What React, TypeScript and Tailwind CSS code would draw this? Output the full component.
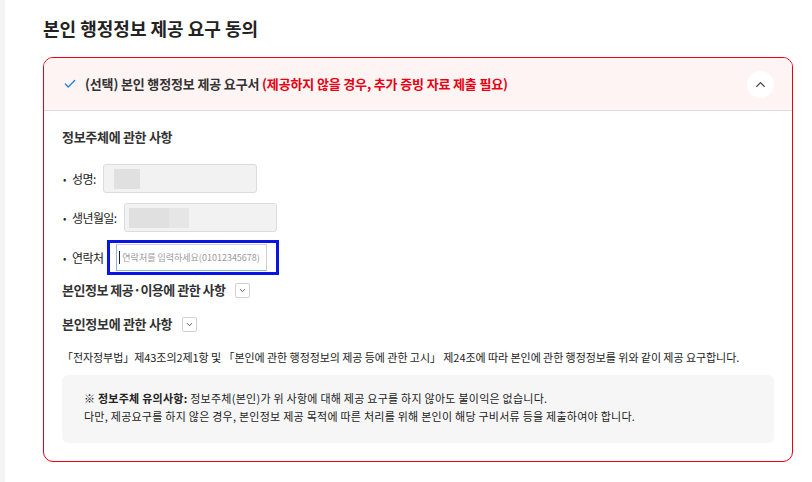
import { Check, ChevronDown, ChevronUp } from "lucide-react"

function SmallToggle() {
  return (
    <button className="flex h-[15px] w-[15px] items-center justify-center rounded-[2px] border border-[#d2d2d2] bg-white">
      <ChevronDown className="h-[9px] w-[9px] text-[#555]" strokeWidth={2.5} />
    </button>
  )
}

function Label({ text }: { text: string }) {
  return (
    <div className="flex items-center text-[12px] leading-[18px] tracking-[-0.6px] text-[#222]">
      <span className="w-[10px] pl-[1px] text-[10px]">•</span>
      <span>{text}</span>
    </div>
  )
}

export default function App() {
  return (
    <div className="flex min-h-[482px] bg-white font-['Noto_Sans_CJK_KR','Noto_Sans',sans-serif] text-[#222]">
      <div className="w-[5px] shrink-0 bg-[#f4f4f4]" />

      <main className="ml-[38px] w-[750px] pt-[16px]">
        <h2 className="text-[18px] leading-[24px] font-bold text-[#222]">
          본인 행정정보 제공 요구 동의
        </h2>

        <section className="mt-[17px] overflow-hidden rounded-[10px] border border-[#e60012]">
          {/* 헤더 */}
          <div className="flex h-[53px] items-center border-b border-[#dcdcdc] bg-[#fff4f4] pl-[19px] pr-[18px]">
            <Check className="h-[14px] w-[14px] text-[#2f7de1]" strokeWidth={2.4} />
            <p className="ml-[8px] text-[13px] font-semibold tracking-[-0.15px] text-[#333]">
              (선택) 본인 행정정보 제공 요구서{" "}
              <span className="font-bold text-[#e60012]">(제공하지 않을 경우, 추가 증빙 자료 제출 필요)</span>
            </p>
            <button className="ml-auto flex h-[27px] w-[27px] items-center justify-center rounded-full bg-white">
              <ChevronUp className="h-[15px] w-[15px] text-[#444]" strokeWidth={2.2} />
            </button>
          </div>

          {/* 본문 */}
          <div className="px-[18px] pt-[17px] pb-[18px]">
            <h3 className="text-[13px] leading-[18px] font-semibold tracking-[-0.3px] text-[#333]">
              정보주체에 관한 사항
            </h3>

            <div className="mt-[18px] flex items-center">
              <Label text="성명:" />
              <div className="ml-[7px] flex h-[29px] w-[154px] items-center rounded-[3px] border border-[#dcdcdc] bg-[#f2f2f2] pl-[10px]">
                <div className="h-[20px] w-[26px] bg-[#e0e0e0]" />
              </div>
            </div>

            <div className="mt-[10px] flex items-center">
              <Label text="생년월일:" />
              <div className="ml-[7px] flex h-[29px] w-[153px] items-center rounded-[3px] border border-[#dcdcdc] bg-[#f2f2f2] pl-[4px]">
                <div className="h-[20px] w-[40px] bg-[#e0e0e0]" />
                <div className="h-[20px] w-[20px] bg-[#e6e6e6]" />
              </div>
            </div>

            <div className="mt-[8px] flex items-center">
              <Label text="연락처" />
              <div className="ml-[4px] flex h-[35px] w-[172px] items-center border-[3px] border-[#0a14e6] pl-[6px]">
                <div className="flex h-[27px] w-[151px] items-center border border-[#cfcfcf] border-b-[#8fb4e8] border-l-[#8fb4e8] pl-[2px]">
                  <span className="h-[13px] w-[1px] bg-[#222]" />
                  <span className="ml-[2px] text-[9px] text-[#9a9a9a]">
                    연락처를 입력하세요(01012345678)
                  </span>
                </div>
              </div>
            </div>

            <div className="mt-[6px] flex items-center gap-[9px]">
              <h3 className="text-[13px] leading-[18px] font-semibold tracking-[-0.5px] text-[#333]">
                본인정보 제공·이용에 관한 사항
              </h3>
              <SmallToggle />
            </div>

            <div className="mt-[16px] flex items-center gap-[10px]">
              <h3 className="text-[13px] leading-[18px] font-semibold tracking-[-0.3px] text-[#333]">
                본인정보에 관한 사항
              </h3>
              <SmallToggle />
            </div>

            <p className="mt-[16px] text-[11px] leading-[16px] tracking-[-0.06px] text-[#222]">
              「전자정부법」제43조의2제1항 및 「본인에 관한 행정정보의 제공 등에 관한 고시」 제24조에 따라 본인에 관한 행정정보를 위와 같이 제공 요구합니다.
            </p>

            <div className="mt-[10px] rounded-[6px] bg-[#f6f6f6] pt-[14px] pb-[18px] pl-[22px] pr-[16px] text-[11px] leading-[18px] tracking-[0.25px] text-[#222]">
              <p>
                <span className="font-bold">※ 정보주체 유의사항:</span> 정보주체(본인)가 위 사항에 대해 제공 요구를 하지 않아도 불이익은 없습니다.
              </p>
              <p>다만, 제공요구를 하지 않은 경우, 본인정보 제공 목적에 따른 처리를 위해 본인이 해당 구비서류 등을 제출하여야 합니다.</p>
            </div>
          </div>
        </section>
      </main>
    </div>
  )
}
